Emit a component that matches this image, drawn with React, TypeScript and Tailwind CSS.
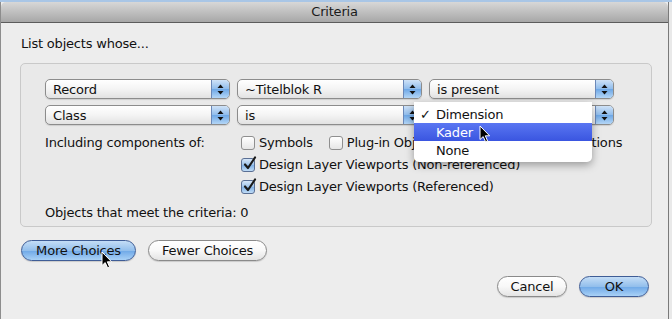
import React from "react";

const font = { fontFamily: '"DejaVu Sans", "Lucida Grande", sans-serif' };

const Arrows = () => (
  <svg width="7" height="11" viewBox="0 0 7 11">
    <path d="M3.5 0.5 L6.5 4 H0.5 Z" fill="#111" />
    <path d="M3.5 10.5 L6.5 7 H0.5 Z" fill="#111" />
  </svg>
);

const Popup = ({ label }: { label: string }) => (
  <div className="flex h-[20px] w-[185px] items-stretch overflow-hidden rounded-[5px] border border-[#8c8c8c] bg-gradient-to-b from-[#ffffff] via-[#f4f4f4] to-[#e2e2e2] shadow-[0_1px_1px_rgba(0,0,0,0.12)]">
    <div className="flex flex-1 items-center pl-[7px] text-[13px] leading-none text-[#111]">{label}</div>
    <div className="flex w-[18px] items-center justify-center border-l border-[#6b88b8] bg-[linear-gradient(#cfe2f7,#8fbcec_50%,#6da7e6_51%,#b4d6f6)]">
      <Arrows />
    </div>
  </div>
);

const Checkbox = ({ checked }: { checked?: boolean }) => (
  <div
    className={
      "relative h-[14px] w-[14px] shrink-0 rounded-[3px] border " +
      (checked
        ? "border-[#5a6f94] bg-[linear-gradient(#d6e6f8,#9cc2ea_50%,#7fb0e6_51%,#c0dcf6)]"
        : "border-[#8f8f8f] bg-gradient-to-b from-[#ffffff] to-[#e6e6e6]")
    }
  >
    {checked && (
      <svg className="absolute left-[1px] top-[-3px]" width="14" height="15" viewBox="0 0 14 15">
        <path d="M2 8.5 L5 12 L12 1.5" stroke="#1a1a1a" strokeWidth="2.2" fill="none" strokeLinecap="round" strokeLinejoin="round" />
      </svg>
    )}
  </div>
);

const Pill = ({ label, blue, w }: { label: string; blue?: boolean; w: string }) => (
  <div
    className={
      "flex h-[21px] items-center justify-center rounded-full border text-[13px] leading-none text-[#111] shadow-[0_1px_1px_rgba(0,0,0,0.15)] " +
      w +
      " " +
      (blue
        ? "border-[#3f5d96] bg-[linear-gradient(#c4ddf6,#93bfec_50%,#6ea8e7_51%,#a9d1f6)]"
        : "border-[#8a8a8a] bg-gradient-to-b from-[#ffffff] via-[#f8f8f8] to-[#e4e4e4]")
    }
  >
    {label}
  </div>
);

const Cursor = ({ className }: { className: string }) => (
  <svg className={"absolute " + className} width="12" height="18" viewBox="0 0 12 18">
    <path d="M1 1 L1 14.5 L4.2 11.6 L6.6 16.8 L8.6 15.9 L6.3 10.8 L10.6 10.8 Z" fill="#000" stroke="#fff" strokeWidth="1" strokeLinejoin="round" />
  </svg>
);

export default function App() {
  return (
    <div className="relative h-[319px] w-[672px] overflow-hidden bg-[#ededed] tracking-[-0.2px]" style={font}>
      <div className="h-[2px] bg-[#a9c6e6]" />
      <div className="flex h-[317px]">
        <div className="flex w-[669px] flex-col border-l border-[#8d8d8d] border-r border-r-[#7a7a7a]">
          <div className="flex h-[21px] items-center justify-center rounded-t-[5px] border-b border-[#5c5c5c] bg-gradient-to-b from-[#d8d8d8] to-[#a7a7a7] text-[13px] text-[#1a1a1a]">
            Criteria
          </div>
          <div className="flex flex-1 flex-col bg-[#ededed] px-[19px] pt-[13px]">
            <div className="pl-[1px] text-[13px] leading-[16px] text-[#111]">List objects whose...</div>
            <div className="mt-[11px] flex h-[164px] w-[632px] flex-col rounded-[5px] border border-[#c9c9c9] bg-[#e9e9e9] pl-[24px] pt-[15px] text-[13px] text-[#111]">
              <div className="flex gap-[7px]">
                <Popup label="Record" />
                <Popup label="~Titelblok R" />
                <Popup label="is present" />
              </div>
              <div className="mt-[6px] flex gap-[7px]">
                <Popup label="Class" />
                <Popup label="is" />
                <Popup label="" />
              </div>
              <div className="mt-[10px] flex">
                <div className="w-[196px] leading-[16px]">Including components of:</div>
                <div className="flex flex-col gap-[6px]">
                  <div className="flex items-center">
                    <Checkbox />
                    <span className="ml-[4px] leading-[16px]">Symbols</span>
                    <span className="ml-[16px]"><Checkbox /></span>
                    <span className="ml-[4px] leading-[16px]">Plug-in Objects</span>
                    <span className="ml-[27px]"><Checkbox /></span>
                    <span className="ml-[4px] leading-[16px]">Viewport Annotations</span>
                  </div>
                  <div className="flex items-center">
                    <Checkbox checked />
                    <span className="ml-[4px] leading-[16px]">Design Layer Viewports (Non-referenced)</span>
                  </div>
                  <div className="flex items-center">
                    <Checkbox checked />
                    <span className="ml-[4px] leading-[16px]">Design Layer Viewports (Referenced)</span>
                  </div>
                </div>
              </div>
              <div className="mt-[10px] leading-[16px]">Objects that meet the criteria: 0</div>
            </div>
            <div className="mt-[13px] flex gap-[12px] pl-[1px]">
              <Pill label="More Choices" blue w="w-[115px]" />
              <Pill label="Fewer Choices" w="w-[119px]" />
            </div>
            <div className="mt-[15px] flex justify-end gap-[12px]">
              <Pill label="Cancel" w="w-[70px]" />
              <Pill label="OK" blue w="w-[70px]" />
            </div>
          </div>
        </div>
        <div className="flex-1 bg-[#e9e9e9]" />
      </div>

      <div className="absolute left-[414px] top-[102px] flex w-[178px] flex-col rounded-b-[5px] bg-white py-[3px] text-[13px] leading-[17px] text-[#111] shadow-[0_3px_9px_rgba(0,0,0,0.35)]">
        <div className="flex h-[18px] items-center">
          <span className="w-[22px] pl-[6px]">✓</span>
          <span>Dimension</span>
        </div>
        <div className="flex h-[18px] items-center bg-gradient-to-b from-[#5a76f2] to-[#3a55e0] text-white">
          <span className="w-[22px]" />
          <span>Kader</span>
        </div>
        <div className="flex h-[18px] items-center">
          <span className="w-[22px]" />
          <span>None</span>
        </div>
      </div>

      <Cursor className="left-[479px] top-[125px]" />
      <Cursor className="left-[101px] top-[251px]" />
    </div>
  );
}
